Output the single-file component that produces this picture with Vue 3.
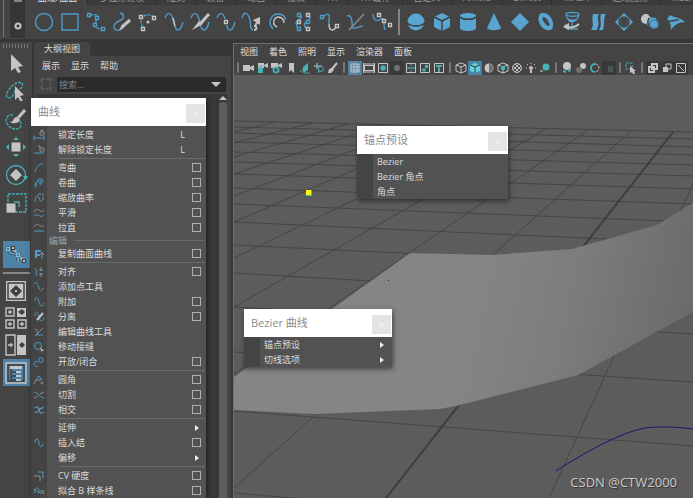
<script setup>
import { h } from 'vue';

const SQ = (x, y, r = 2) => `M${x - r} ${y - r}h${r * 2}v${r * 2}h${-r * 2}z`;
const DOT = (x, y, r) => `M${x - r} ${y}a${r} ${r} 0 1 0 ${r * 2} 0a${r} ${r} 0 1 0 ${-r * 2} 0z`;
const WAVE = 'M-9 -4C-7 -10 -3 -10 -1 -3C1 4 1 8 4 8C7 8 8 4 9 0';
const SMALL_WAVE = 'M-4 -1C-4 -6 -1 -6 0 0C1 5 4 5 5 1';

// every icon is a list of [class, path] pairs around the origin
const Icon = ({ parts, size }) =>
	h(
		'svg',
		{ class: 'icon', width: size, height: size, viewBox: `${-size / 2} ${-size / 2} ${size} ${size}` },
		parts.map(([cls, d]) => h('path', { class: cls, d }))
	);
Icon.props = ['parts', 'size'];

const tabs = [
	{ name: '曲线/曲面', width: 60 },
	{ name: '多边形建模', width: 69 },
	{ name: '雕刻', width: 39 },
	{ name: '装备', width: 40 },
	{ name: '动画', width: 41 },
	{ name: '渲染', width: 39 },
	{ name: 'FX', width: 33 },
	{ name: 'FX 缓存', width: 54 },
	{ name: '自定义', width: 49 },
	{ name: 'Arnold', width: 51 },
	{ name: 'Bifrost', width: 49 },
	{ name: 'MASH', width: 50 },
	{ name: '运动图形', width: 58 },
	{ name: 'XGen', width: 48 },
];

const curveShelf = [
	[['b', DOT(0, 0, 8.5)]],
	[['b', SQ(0, 0, 8)]],
	[['b dash', 'M-6 -7C0 -8 2 -7 1 -4L-1 3C0 7 3 7 7 7'], ['kf', SQ(-7, -7) + SQ(1, -4) + SQ(-1, 3) + SQ(7, 7)], ['b', SQ(-7, -7, 1.5) + SQ(1, -4, 1.5) + SQ(-1, 3, 1.5) + SQ(7, 7, 1.5)]],
	[['b', 'M-2 -9C3 -8 2 -4 -1 -2C-5 0 -9 2 -8 6C-7 9 -3 9 0 7'], ['w w3', 'M8 -2L0 5'], ['wf', 'M0 3L2 6L-3 8z']],
	[['b dash', 'M-5 5C-11 -4 -1 -11 6 -5'], ['kf', SQ(-7, -5) + SQ(6, -4) + SQ(-5, 7)], ['w', SQ(-7, -5, 1.5) + SQ(6, -4, 1.5) + SQ(-5, 7, 1.5)], ['wf', DOT(0, 0, 1.5)]],
	[['b', WAVE], ['w', 'M-1 -4L1 4']],
	[['b', WAVE], ['w w3', 'M9 -8L1 1'], ['wf', 'M-1 -1L3 2L-8 8z']],
	[['b', WAVE], ['kf', SQ(0, 0, 3)], ['w', SQ(0, 0, 1.5)]],
	[['b', 'M-10 -4C-8 -11 -4 -10 -2 -2C-1 4 -2 8 1 8'], ['w w2', 'M2 8C5 8 5 5 3 4L6 -1'], ['wf', 'M1 -2L8 -5L8 3z']],
	[['b', 'M-5 7C-11 1 -7 -8 0 -8C5 -8 8 -5 7 -2'], ['w', 'M-1 5C-7 2 -4 -5 1 -5C5 -4 6 -1 6 1']],
	[['b', 'M-5 -7C2 -5 -8 -2 -8 1C-8 4 -6 6 -5 7M4 -7C9 -4 3 -1 1 1C-1 4 2 6 4 7'], ['kf', SQ(-5, -7) + SQ(-5, 0) + SQ(-5, 7) + SQ(4, -7) + SQ(4, 0) + SQ(4, 7)], ['b', SQ(-5, -7, 1.5) + SQ(-5, 7, 1.5) + SQ(4, 0, 1.5)], ['w', SQ(-5, 0, 1.5) + SQ(4, -7, 1.5) + SQ(4, 7, 1.5)]],
	[['b', 'M-7 -5C-2 -10 0 -8 -1 -2V2'], ['w', 'M-1 2C-1 10 4 9 6 5'], ['kf', SQ(-8, -5) + SQ(7, 4)], ['b', SQ(-8, -5, 1.5)], ['w', SQ(7, 4, 1.5)]],
	[['b', 'M-9 -6C-2 -8 -5 4 -3 6C0 7 4 4 7 4'], ['g', 'M8 -8L-7 8']],
	[['b', 'M-9 -8C-9 -3 -6 0 -3 -2C1 -5 2 -3 2 0C2 4 2 6 3 8'], ['kf', SQ(2, -1)], ['w', SQ(-3, -7, 1.5) + SQ(2, -1, 1.5) + SQ(8, 3, 1.5)]],
];

const surfaceShelf = [
	[['bf', DOT(0, 0, 8.5)], ['k', 'M-9 1C-4 5 4 5 9 1']],
	[['bf', 'M0 -9L8 -5V5L0 9L-8 5V-5z'], ['k', 'M-8 -5L0 -1L8 -5M0 -1V9']],
	[['bf', 'M-8 -6C-8 -10 8 -10 8 -6V6C8 10 -8 10 -8 6z'], ['k', 'M-8 -5C-6 -2 6 -2 8 -5']],
	[['bf', 'M0 -9L7 6C5 9 -5 9 -7 6z']],
	[['bf', 'M0 -9L9 0L0 9L-9 0z']],
	[['bf evenodd', 'M-4 -9C3 -10 8 -2 7 4C7 8 4 9 1 8C-5 7 -9 -1 -7 -6C-7 -8 -5 -9 -4 -9zM-3 -5C-5 -3 0 4 3 4C5 3 1 -5 -3 -5z']],
	[['b', 'M-6 -8C-6 -10 7 -10 7 -8C7 -5 -6 -5 -6 -8zM-6 -8C-5 2 6 2 7 -8M0 0V5M-5 7H6'], ['bf', 'M-5 -4C0 -2 3 -2 6 -4C4 1 -4 2 -5 -4z'], ['w w2', 'M-7 3C-3 7 3 6 7 2'], ['wf', 'M-9 5L-3 1V8z']],
	[['bf', 'M-5 -8H1C-2 -4 2 0 0 4L-1 8H-7C-3 3 -7 -2 -5 -8zM3 -8H8C5 -4 7 2 5 8H1C5 2 1 -3 3 -8z']],
	[['bf evenodd', 'M0 -9L9 0L0 9L-9 0z' + DOT(0, 0, 4)], ['k', DOT(0, 0, 5)]],
	[['wf', DOT(-4, -3, 5)], ['k', 'M-1 -7L3 -4'], ['bf', 'M-1 -5L6 -4L8 6L2 6L-4 2z'], ['k', DOT(4, 2, 4) + 'M-1 -4C-3 0 -2 3 0 4'], ['b', DOT(4, 2, 4)]],
	[['bf', 'M-6 -7C-1 -4 4 -5 9 0C3 0 -2 3 -5 8C-5 3 -6 -1 -9 -3z'], ['k', 'M-7 -1C-3 0 -1 -3 3 -2']],
];

const tools = [
	[['wf', 'M-5 -9L7 3L2 4L5 9L2 10L-1 5L-5 8z']],
	[['t dash', 'M5 -8C-1 -11 -12 2 -9 6C-6 9 -1 4 -1 -2M6 -8C8 -6 5 -3 4 -1'], ['wf', 'M-1 -5L8 4L4 5L7 10L4 10L2 6L-1 9z']],
	[['t dash', 'M-3 -4C-9 -5 -12 1 -8 6C-4 12 6 11 5 5C5 2 2 0 1 -1'], ['w w3', 'M9 -9L2 -1'], ['wf', 'M-6 3C-2 3 -3 -2 1 -2L4 1C2 5 -3 5 -6 3z']],
	[['wf', SQ(0, 0, 4.5)], ['tf', 'M0 -10L3 -7H-3zM0 10L3 7H-3zM-10 0L-7 -3V3zM10 0L7 -3V3z']],
	[['t', DOT(0, 0, 9.5)], ['wf', 'M0 -6L6 0L0 6L-6 0z'], ['tf', 'M7 1H12L10 5z']],
	[['t dash', SQ(1, 0, 9)], ['t', 'M-2 -1H3V4'], ['wf', SQ(-5, 5, 4.5)]],
];
const bezierTool = [['k w3', 'M-8 -6C-6 1 0 -2 2 0L2 7'], ['b2', 'M-8 -6C-6 1 0 -2 2 0L2 7'], ['w', 'M-3 -7L2 0L8 6'], ['kf', SQ(-8, -6, 2.5) + SQ(2, 0, 2.5) + SQ(-3, -7) + SQ(8, 6)], ['b2', SQ(-8, -6, 1.5) + SQ(2, 0, 1.5)], ['wf', SQ(-3, -7, 1) + SQ(8, 6, 1)]];
const fourWay = [['lightbox', SQ(0, 0, 10)], ['k1', SQ(0, 0, 8)], ['kf', 'M0 -6L3 -3L0 0L-3 -3zM0 6L3 3L0 0L-3 3zM-6 0L-3 -3L0 0L-3 3zM6 0L3 -3L0 0L3 3z'], ['wf', SQ(0, 0, 1)]];
const fourPane = [['lightbox', 'M1 -10H10V-1H1z'], ['w', 'M-10 -10H-2V-2H-10zM-10 2H-2V10H-10zM2 2H10V10H2zM-8 -6H-4M-6 -8V-4M-8 6H-4M-6 4V8M4 6H8M6 4V8'], ['kf', 'M2 -6L6 -9L9 -6L6 -3z']];
const twoPane = [['lightbox', 'M1 -10H10V10H1z'], ['w', 'M-10 -10H-1V10H-10zM-8 0H-3M-5 -2V2'], ['kf', 'M3 0L6 -3L9 0L6 3z']];
const outlinerPane = [['w', SQ(0, 0, 10)], ['k1', SQ(0, 0, 8)], ['k', 'M-5 -7V7M-4 -5H1M-4 -1H2M-4 3H2M-4 7H2'], ['wf', 'M-6 -7H6V-4H-6zM0 -2H5V0H0zM0 2H5V4H0zM0 6H5V8H0z']];

const CAMERA = 'M-6 -3H1V3H-6zM1 -1L5 -3V3L1 1z';
const CUBE = 'M0 -5L5 -3V3L0 5L-5 3V-3zM-5 -3L0 -1L5 -3M0 -1V5';
const panelGroups = [
	[
		[['wf', CAMERA]],
		[['wf', 'M-5 -5H1V0H-5zM1 -3L5 -5V0L1 -2z'], ['tf', 'M-5 0H0V5H-5z'], ['t', 'M-4 0V-2H-1V0']],
		[['wf', 'M-6 -5H1V0H-6zM1 -3L5 -5V0L1 -2z'], ['t w2', DOT(-1, 2, 2.5)]],
		[['wf', 'M-2 -5H3V5L0 2L-2 4z']],
		[['tf', 'M3 -5V2L-2 5V-1z'], ['t', 'M-5 4L-1 1M-1 5H5']],
		[['w', 'M-5 -2H3M-2 -5V1'], ['t', DOT(2, 1, 2.5) + 'M-5 -2H0M0 2L-1 5']],
		[['w w2', 'M4 -5L-1 1'], ['wf', 'M-4 1L-1 0L1 2L-2 5H-5z']],
	],
	[
		[['w', 'M-4 -4H4V4H-4zM-4 -1H4M-4 2H4M-1 -4V4M2 -4V4']],
		[['wf evenodd', 'M-6 -5H6V5H-6zM-4 -2V2H4V-2z'], ['k', 'M-5 -4H5M-5 4H5']],
		[['w', SQ(0, 0, 4.5)], ['tf', DOT(0, 0, 2.7)]],
		[['darkbox', SQ(0, 0, 6)], ['gf', DOT(0, 0, 3)]],
		[['w', SQ(0, 0, 4.5)], ['t', 'M-4 0H4M0 -4V-2M0 2V4M-2 -1V1M2 -1V1']],
		[['w', SQ(0, 0, 4.5)], ['tf', 'M0 -3H3V0H0z' + DOT(-1, 2, 1.8)]],
		[['w', SQ(0, 0, 4.5)], ['t w2', 'M-3 -2H3M0 -2V4']],
	],
	[
		[['w', CUBE]],
		[['cf', 'M0 -5L5 -3V3L0 5L-5 3V-3z'], ['k', 'M-5 -3L0 -1L5 -3M0 -1V5']],
		[['wf', DOT(0, 0, 4.5)], ['gf', 'M0 -4A4 4 0 0 1 0 4z']],
		[['w', CUBE], ['tf', SQ(0, 0, 2)]],
		[['w', DOT(0, 0, 4.5) + 'M-4 -2L2 4M-2 -4L4 2M4 -2L-2 4M2 -4L-4 2']],
		[['wf', DOT(0, 0, 2) + 'M-1 2H1V5H-1z'], ['w', 'M-5 0H-4M4 0H5M0 -5V-4M-4 -4L-3 -3M4 -4L3 -3']],
		[['tf', DOT(1, -1, 3.5)], ['g w2', 'M-5 3H-2']],
	],
	[
		[['wf', DOT(0, -2, 4)], ['t w2', 'M-4 3L-1 4M1 3L4 2']],
		[['wf', DOT(2, -2, 3)], ['gf', DOT(-2, 2, 3)]],
		[['t w2', 'M0 -4A4 4 0 0 0 0 4'], ['w dash', 'M0 -4A4 4 0 0 1 0 4']],
		[['darkbox', SQ(0, 0, 6)], ['faint', 'M-1 -2H4V4H-1z']],
	],
	[[['t dash', 'M-5 -5H1V1H-5z'], ['wf', 'M-1 -2L5 3L3 3L4 6L2 6L1 4L-1 5z']]],
	[
		[['darkbox', SQ(0, 0, 6)], ['w w2', 'M-1 -4H4V1H-1zM-4 -1H1V4H-4z']],
		[['darkbox', SQ(0, 0, 6)], ['w', 'M-1 -4H4V1H-1z'], ['wf', 'M-4 -1H1V4H-4z']],
		[['darkbox', SQ(0, 0, 6)], ['w', SQ(0, 0, 4.5) + 'M-3 -3L3 3']],
	],
];

const curveMenu = [
	{ label: '锁定长度', key: 'L', icon: [['b', 'M-5 3H5M-5 1V5M5 1V5'], ['g', 'M1 -3H5V0H1zM2 -3V-5H4V-3']] },
	{ label: '解除锁定长度', key: 'L', icon: [['b', 'M-5 3H5'], ['g', 'M1 -2H5V1H1zM1 -2V-4H-1']] },
	{ type: 'line' },
	{ label: '弯曲', box: true, icon: [['b', 'M-4 4C-3 -1 0 -4 4 -4']] },
	{ label: '卷曲', box: true, icon: [['b', 'M-4 4C-4 -2 2 -6 4 -3C4 1 -1 1 -1 -2C-1 -5 4 -3 1 2M-4 4C-1 3 -4 -1 -3 0']] },
	{ label: '缩放曲率', box: true, icon: [['b', 'M-4 4C-3 -4 -1 -4 0 0C1 4 2 4 3 2'], ['g dash', 'M-1 -4H4V3']] },
	{ label: '平滑', box: true, icon: [['g', 'M-5 -1C-3 -5 -1 -4 1 -2C3 -1 4 -2 5 -3'], ['b', 'M-5 3C-3 1 -1 2 1 3C3 4 4 3 5 2']] },
	{ label: '拉直', box: true, icon: [['g', 'M-5 -1C-3 -5 -1 -4 1 -2C3 -1 4 -2 5 -3'], ['b', 'M-5 3H5']] },
	{ type: 'section', label: '编辑' },
	{ label: '复制曲面曲线', box: true, icon: [['b w2', 'M-3 4V-3H2M-4 1H1'], ['g', 'M3 5V-1M1 1L3 -2L5 1']] },
	{ type: 'line' },
	{ label: '对齐', box: true, icon: [['b', 'M-4 -4C-1 -1 -4 1 -2 4'], ['g', 'M2 -5V-1M2 1V5M0 -2H4M0 2H4']] },
	{ label: '添加点工具', icon: [['b', 'M-5 -3C-2 -7 -1 -1 0 1'], ['g dash', 'M0 1C1 5 4 4 4 0']] },
	{ label: '附加', box: true, icon: [['b', SMALL_WAVE]] },
	{ label: '分离', box: true, icon: [['b', SMALL_WAVE], ['w w2', 'M4 -4L-2 3']] },
	{ label: '编辑曲线工具', icon: [['b', 'M-4 -3C0 -3 -3 3 -1 3H4'], ['g', 'M4 -4L-4 4']] },
	{ label: '移动接缝', icon: [['b', DOT(-1, -1, 3.5)], ['wf', 'M1 0L5 4L3 4V6z']] },
	{ label: '开放/闭合', box: true, icon: [['b', 'M-1 0A2.5 2.5 0 1 0 -1 4' + DOT(2, -2, 2.3)]] },
	{ type: 'line' },
	{ label: '圆角', box: true, icon: [['b', 'M-3 0L0 -4L3 0'], ['g', 'M-5 4L-3 0H2' + DOT(3, 3, 1)]] },
	{ label: '切割', box: true, icon: [['b', 'M-5 -3C-1 -3 1 3 5 3'], ['g', 'M-5 3L-1 1M1 -1L5 -3']] },
	{ label: '相交', box: true, icon: [['b', 'M-5 -2C-1 -5 0 2 5 -3M-4 3C0 -1 1 5 5 2M-2 -4L2 4'], ['g', 'M-3 3L3 -3']] },
	{ type: 'line' },
	{ label: '延伸', sub: true },
	{ label: '插入结', box: true, icon: [['b', 'M-4 0C-4 -6 0 -5 0 0C0 5 4 4 4 1']] },
	{ label: '偏移', sub: true },
	{ type: 'line' },
	{ label: 'CV 硬度', box: true, icon: [['g', 'M-5 0H1V5'], ['b', 'M-1 -4H4V2']] },
	{ label: '拟合 B 样条线', box: true, icon: [['b', 'M-5 2C-3 -5 -1 -4 0 0C1 4 3 3 5 0'], ['g', 'M-5 -2L0 2L3 -1L5 3']] },
];
const anchorMenu = [{ label: 'Bezier' }, { label: 'Bezier 角点' }, { label: '角点' }];
const bezierMenu = [
	{ label: '锚点预设', sub: true },
	{ label: '切线选项', sub: true },
];
const windows = [
	{ id: 'curves', title: '曲线', items: curveMenu },
	{ id: 'anchors', title: '锚点预设', items: anchorMenu },
	{ id: 'bezier', title: 'Bezier 曲线', items: bezierMenu },
];

// ground plane, [x1, y1, x2, y2]
const grid = [
	[234, 121, 693, 132],
	[234, 127, 693, 139],
	[234, 133, 693, 147],
	[234, 142, 693, 155],
	[234, 152, 693, 165],
	[234, 162, 693, 176],
	[234, 174, 693, 189],
	[234, 188, 693, 204],
	[234, 204, 693, 222],
	[234, 222, 693, 243],
	[234, 245, 693, 267],
	[234, 273, 693, 300],
	[234, 307, 693, 334],
	[234, 352, 693, 382],
	[234, 411, 693, 446],
	[234, 493, 693, 532],
	[631, 131, 234, 488],
	[588, 130, 234, 374],
	[546, 129, 234, 307],
	[504, 128, 234, 258],
	[455, 126, 234, 222],
	[420, 125, 234, 196],
	[383, 125, 234, 174],
	[347, 124, 234, 157],
	[312, 123, 234, 143],
	[275, 122, 234, 132],
	[693, 184, 549, 498],
];
</script>

<template>
	<div class="maya">
		<header class="shelf">
			<span class="grip tall"></span>
			<div class="shelf-options">
				<i></i>
				<Icon :parts="[['w w2', DOT(0, 0, 2.5)]]" :size="12" />
			</div>
			<div class="shelf-main">
				<nav class="tabs">
					<button v-for="(tab, i) in tabs" :key="tab.name" :class="{ active: i === 0 }" :style="{ width: tab.width + 'px' }">{{ tab.name }}</button>
				</nav>
				<div class="shelf-icons">
					<button v-for="(icon, i) in curveShelf" :key="i"><Icon :parts="icon" :size="24" /></button>
					<hr />
					<button v-for="(icon, i) in surfaceShelf" :key="i"><Icon :parts="icon" :size="24" /></button>
				</div>
			</div>
		</header>

		<main class="workspace">
			<aside class="toolbox">
				<span class="grip"></span>
				<div class="tools">
					<button v-for="(icon, i) in tools" :key="i"><Icon :parts="icon" :size="26" /></button>
				</div>
				<button class="selected"><Icon :parts="bezierTool" :size="26" /></button>
				<hr />
				<div class="layouts">
					<button><Icon :parts="fourWay" :size="22" /></button>
					<button><Icon :parts="fourPane" :size="22" /></button>
					<button><Icon :parts="twoPane" :size="22" /></button>
					<button class="selected"><Icon :parts="outlinerPane" :size="22" /></button>
				</div>
			</aside>

			<section class="outliner">
				<div class="outliner-tabs"><button>大纲视图</button></div>
				<nav class="menubar"><button>展示</button><button>显示</button><button>帮助</button></nav>
				<div class="search">
					<Icon :parts="[['dim dash', 'M-4 -5H4V5H-4z'], ['dim', 'M-5 -3V-5H-3M3 -5H5V-3M-5 3V5H-3M3 5H5V3']]" :size="14" />
					<label class="search-box">
						<input type="text" placeholder="搜索..." />
						<svg width="10" height="5" viewBox="0 0 10 5"><path class="wf" d="M0 0H10L5 5z" /></svg>
					</label>
				</div>
				<div class="tree">
					<div class="scrollbar">
						<svg width="8" height="8" viewBox="0 0 8 8"><path class="wf" d="M0 6L4 2L8 6z" /></svg>
						<i></i>
					</div>
				</div>
			</section>

			<section class="viewport">
				<nav class="menubar">
					<button>视图</button><button>着色</button><button>照明</button><button>显示</button><button>渲染器</button><button>面板</button>
				</nav>
				<div class="panel-tools">
					<template v-for="(group, g) in panelGroups" :key="g">
						<hr />
						<button v-for="(icon, i) in group" :key="i" :class="{ selected: (g === 1 && i === 0) || (g === 2 && i === 1) }">
							<Icon :parts="icon" :size="14" />
						</button>
					</template>
				</div>
				<div class="scene">
					<svg viewBox="234 75 459 423" preserveAspectRatio="xMinYMin slice">
						<defs>
							<linearGradient id="sheet" gradientUnits="userSpaceOnUse" x1="470" y1="300" x2="700" y2="350">
								<stop offset="0" stop-color="#858585" />
								<stop offset="0.4" stop-color="#7d7d7d" />
								<stop offset="1" stop-color="#686868" />
							</linearGradient>
						</defs>
						<line v-for="(l, i) in grid" :key="i" class="grid-line" :x1="l[0]" :y1="l[1]" :x2="l[2]" :y2="l[3]" />
						<line class="grid-line axis" x1="673" y1="132" x2="386" y2="498" />
						<polygon fill="url(#sheet)" points="234,377 332,309 410,253 492,255 572,249 657,225 693,203 693,312 578,375 460,405 440,409 315,414 234,410" />
						<path class="nurbs" d="M556 471C585 452 622 432 645 428C661 426 678 427 693 429" />
						<rect fill="#222" x="388" y="280" width="1" height="1" />
						<rect fill="#2cc5a5" x="306" y="190" width="6" height="6" />
						<rect fill="#ff0" x="306" y="190" width="5" height="5" />
					</svg>
					<span class="watermark">CSDN @CTW2000</span>
				</div>
			</section>
		</main>

		<section v-for="win in windows" :key="win.id" class="window" :class="win.id">
			<header class="titlebar">
				<h2>{{ win.title }}</h2>
				<button>×</button>
			</header>
			<ul class="menu">
				<template v-for="(item, i) in win.items" :key="i">
					<li v-if="item.type === 'line'" class="line"></li>
					<li v-else-if="item.type === 'section'" class="section">{{ item.label }}</li>
					<li v-else class="item">
						<span class="gutter"><Icon v-if="item.icon" :parts="item.icon" :size="14" /></span>
						<label v-if="item.box">{{ item.label }}<input type="checkbox" /></label>
						<button v-else>
							{{ item.label }}
							<kbd v-if="item.key">{{ item.key }}</kbd>
							<svg v-if="item.sub" class="arrow" width="4" height="6" viewBox="0 0 4 6"><path d="M0 0L4 3L0 6z" /></svg>
						</button>
					</li>
				</template>
			</ul>
		</section>
	</div>
</template>

<style>
body {
	background: #444;
}
</style>

<style scoped>
* {
	box-sizing: border-box;
}

.maya {
	position: relative;
	display: flex;
	flex-direction: column;
	height: 100vh;
	overflow: hidden;
	background: #373737;
	color: #ddd;
	font: 9px/12px 'Open Sans', 'Noto Sans CJK SC', sans-serif;
}

button {
	display: block;
	margin: 0;
	padding: 0;
	border: 0;
	background: none;
	color: inherit;
	font: inherit;
	white-space: nowrap;
}

hr {
	margin: 0;
	border: 0;
	flex: none;
}

svg {
	display: block;
	flex: none;
}

/* shelf */
.shelf {
	display: flex;
	flex: none;
	height: 39px;
	background: #444;
}

.grip {
	flex: none;
	width: 28px;
	height: 4px;
	margin: 2px 1px 0;
	background: radial-gradient(circle, #777 0 30%, transparent 50%) 0 0 / 3px 2px;
}

.grip.tall {
	width: 4px;
	height: 37px;
	margin: 0 4px 0 2px;
}

.shelf-options {
	display: flex;
	flex-direction: column;
	align-items: center;
	justify-content: space-between;
	flex: none;
	width: 15px;
	height: 38px;
	padding-bottom: 6px;
	background: #363636;
}

.shelf-options i {
	width: 8px;
	height: 2px;
	background: #888;
}

.shelf-main {
	flex: 1;
	min-width: 0;
}

.tabs {
	display: flex;
	align-items: flex-end;
	height: 5px;
	margin-left: 3px;
	overflow: hidden;
	background: #373737;
}

.tabs button {
	flex: none;
	height: 14px;
	border-right: 1px solid #2e2e2e;
	background: #3b3b3b;
	color: #999;
}

.tabs button.active {
	background: #444;
	color: #ddd;
}

.shelf-icons {
	display: flex;
	align-items: center;
	height: 33px;
	padding-left: 6px;
}

.shelf-icons button {
	display: flex;
	flex: none;
	justify-content: center;
	width: 26px;
}

.shelf-icons hr {
	width: 2px;
	height: 26px;
	margin: 0 3px;
	background: #858585;
}

/* icon paint */
.maya :deep(path) {
	fill: none;
}
.shelf :deep(path),
.toolbox :deep(path) {
	stroke-width: 1.4;
}
.maya :deep(.b) {
	stroke: #4d9bc6;
}
.maya :deep(.b2) {
	stroke: #78c0e8;
}
.maya :deep(.w) {
	stroke: #c4c4c4;
}
.maya :deep(.g) {
	stroke: #8d8d8d;
}
.maya :deep(.t) {
	stroke: #48a9b0;
}
.maya :deep(.k),
.maya :deep(.k1) {
	stroke: #3c3c3c;
}
.maya :deep(.dim) {
	stroke: #666;
}
.maya :deep(.bf) {
	fill: #57a5d0;
}
.maya :deep(.wf) {
	fill: #c4c4c4;
}
.maya :deep(.tf) {
	fill: #48b4b8;
}
.maya :deep(.kf) {
	fill: #3f3f3f;
}
.maya :deep(.gf) {
	fill: #707070;
}
.maya :deep(.cf) {
	fill: #5cd0dc;
}
.maya :deep(.faint) {
	fill: #455656;
}
.maya :deep(.lightbox) {
	fill: #c4c4c4;
}
.maya :deep(.darkbox) {
	fill: #3b3b3b;
	stroke: #303030;
}
.maya :deep(.evenodd) {
	fill-rule: evenodd;
}
.maya :deep(.dash) {
	stroke-dasharray: 3 1;
}
.maya :deep(.w2) {
	stroke-width: 2;
}
.maya :deep(.w3) {
	stroke-width: 3;
}

/* workspace */
.workspace {
	display: flex;
	flex: 1;
	min-height: 0;
	padding-top: 3px;
}

.toolbox {
	display: flex;
	flex-direction: column;
	align-items: center;
	flex: none;
	width: 32px;
	background: #444;
}

.tools {
	display: grid;
	grid-auto-rows: 27px;
	gap: 1px;
	margin: 1px 0 25px;
}

.toolbox button {
	display: flex;
	align-items: center;
	justify-content: center;
	width: 27px;
}

.toolbox .selected {
	flex: none;
	height: 27px;
	background: #4e82a8;
}

.toolbox hr {
	width: 27px;
	height: 2px;
	margin: 4px 0 6px;
	background: #868686;
}

.layouts {
	display: grid;
	gap: 5px;
}

.layouts .selected {
	margin-top: -2px;
}

.outliner {
	display: flex;
	flex-direction: column;
	flex: none;
	width: 197px;
	margin: 0 2px;
	background: #444;
}

.outliner-tabs {
	height: 14px;
	background: #373737;
}

.outliner-tabs button {
	height: 14px;
	padding: 0 10px;
	border-radius: 2px 2px 0 0;
	background: #444;
}

.menubar {
	display: flex;
	flex: none;
	gap: 11px;
	align-items: center;
}

.outliner .menubar {
	height: 19px;
	padding-left: 8px;
}

.search {
	display: flex;
	align-items: center;
	gap: 4px;
	height: 18px;
	padding: 0 5px;
}

.search-box {
	display: flex;
	flex: 1;
	align-items: center;
	height: 15px;
	padding: 0 5px 0 2px;
	border-radius: 2px;
	background: #2b2b2b;
}

.search-box input {
	flex: 1;
	min-width: 0;
	height: 15px;
	padding: 0;
	border: 0;
	background: none;
	color: inherit;
	font: inherit;
}

.search-box input::placeholder {
	color: #858585;
}

.tree {
	display: flex;
	flex: 1;
	justify-content: flex-end;
	margin: 1px 4px 0 3px;
	background: #383838;
}

.scrollbar {
	display: flex;
	flex-direction: column;
	align-items: center;
	width: 8px;
}

.scrollbar i {
	flex: 1;
	width: 8px;
	border-radius: 3px 3px 0 0;
	background: #5d5d5d;
}

.viewport {
	display: flex;
	flex: 1;
	flex-direction: column;
	min-width: 0;
	margin-top: 1px;
	border: solid #6f6f6f;
	border-width: 1px 0 0 1px;
	background: #444;
}

.viewport .menubar {
	height: 16px;
	padding-left: 6px;
}

.panel-tools {
	display: flex;
	align-items: center;
	height: 15px;
	overflow: hidden;
}

.panel-tools hr {
	width: 2px;
	height: 11px;
	margin: 0 3px;
	border-radius: 1px;
	background: #777;
}

.panel-tools .selected {
	background: #4e82a8;
}

.scene {
	position: relative;
	flex: 1;
	min-height: 0;
	overflow: hidden;
	background: #5c5c5c;
}

.scene svg {
	width: 100%;
	height: 100%;
}

.grid-line {
	stroke: #454545;
}

.axis {
	stroke: #3d3d3d;
	stroke-width: 2;
}

.nurbs {
	stroke: #161670;
}

.watermark {
	position: absolute;
	right: 16px;
	bottom: 7px;
	color: #ccc;
	font-size: 13px;
	line-height: 18px;
	text-shadow: 1px 1px 1px #333;
}

/* floating menus */
.window {
	position: absolute;
	background: #525252;
	box-shadow: 1px 2px 5px rgba(0, 0, 0, 0.5);
}

.curves {
	top: 98px;
	left: 31px;
	width: 175px;
}

.anchors {
	top: 126px;
	left: 357px;
	width: 151px;
}

.bezier {
	top: 309px;
	left: 244px;
	width: 148px;
}

.titlebar {
	display: flex;
	align-items: center;
	justify-content: space-between;
	height: 28px;
	padding: 0 1px 0 7px;
	background: #fff;
	color: #8c8c8c;
}

.titlebar h2 {
	margin: 0;
	font-size: 11px;
	font-weight: 400;
	line-height: 16px;
}

.titlebar button {
	width: 19px;
	height: 19px;
	margin-top: 3px;
	background: #e4e4e4;
	color: #f8f8f8;
	font-size: 11px;
}

.menu {
	margin: 0;
	padding: 1px 1px 0;
	list-style: none;
	background: linear-gradient(90deg, #444 16px, #525252 16px);
}

.anchors .menu,
.bezier .menu {
	padding-top: 0;
}

.item {
	display: flex;
	align-items: center;
	height: 15px;
}

.gutter {
	width: 15px;
	flex: none;
}

.item label,
.item button {
	display: flex;
	flex: 1;
	align-items: center;
	justify-content: space-between;
	padding: 0 7px 0 4px;
}

.curves .item label,
.curves .item button {
	padding: 0 4px 0 11px;
}

.item input {
	width: 9px;
	height: 9px;
	margin: 0;
	border: 1px solid #b0b0b0;
	appearance: none;
}

.item kbd {
	margin-right: 16px;
	font: inherit;
}

.arrow path {
	fill: #eee;
}

.curves .arrow {
	margin-right: 2px;
}

.line {
	height: 3px;
	margin-left: 27px;
	background: linear-gradient(#6a6a6a, #6a6a6a) 0 1px / 100% 1px no-repeat;
}

.section {
	display: flex;
	align-items: center;
	gap: 7px;
	height: 11px;
	padding-left: 17px;
	color: #a0a0a0;
}

.section::after {
	flex: 1;
	height: 1px;
	background: #6a6a6a;
	content: '';
}
</style>
